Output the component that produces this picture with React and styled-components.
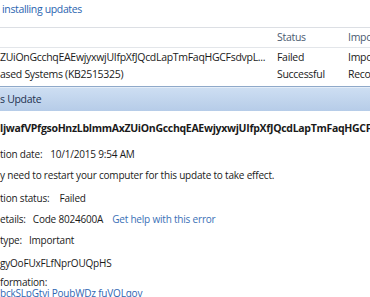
import React from "react"
import styled, { createGlobalStyle } from "styled-components"

const GlobalStyle = createGlobalStyle`
  html, body {
    margin: 0;
    padding: 0;
    background: #ffffff;
    overflow: hidden;
  }
  body {
    font-family: "Open Sans", "Noto Sans", "Liberation Sans", sans-serif;
    font-size: 10px;
    letter-spacing: -0.2px;
    color: #1a1a1a;
  }
`

const Screen = styled.div`
  position: relative;
  width: 370px;
  height: 297px;
  overflow: hidden;
  background: #ffffff;
`

const TopLink = styled.div`
  color: #2a64b0;
  font-size: 10.5px;
  letter-spacing: -0.35px;
  padding: 1px 0 0 2px;
  height: 26px;
  line-height: 16px;
`

const List = styled.div`
  border-top: 1px solid #dcdfe4;
`

const Row = styled.div`
  display: grid;
  grid-template-columns: 277px 71px 1fr;
  height: ${props => (props.header ? "19px" : "17px")};
  line-height: ${props => (props.header ? "19px" : "17px")};
  font-size: 10.5px;
  letter-spacing: -0.3px;
  white-space: nowrap;
  overflow: hidden;
  color: ${props => (props.header ? "#4a5a70" : "#1a1a1a")};
  border-bottom: ${props => (props.header ? "1px solid #e3e6ea" : "none")};
  margin-bottom: ${props => (props.header ? "1px" : "0")};
`

const Cell = styled.span`
  overflow: hidden;
  padding-right: ${props => props.padRight || 0}px;
`

const Dialog = styled.div`
  position: absolute;
  left: 0;
  right: 0;
  top: 87px;
  bottom: 0;
  background: #ffffff;
  box-shadow: 0 -1px 0 #8fa9c9;
`

const TitleBar = styled.div`
  height: 23px;
  line-height: 23px;
  background: linear-gradient(#cddef2, #b6cce8);
  border-top: 1px solid #e4edf8;
  color: #1d3150;
  font-size: 10.5px;
  letter-spacing: -0.3px;
`

const Body = styled.div`
  display: flex;
  flex-direction: column;
  white-space: nowrap;
  overflow: hidden;
`

const Line = styled.div`
  height: ${props => props.h || 21}px;
  line-height: ${props => props.lh || 16}px;
  font-weight: ${props => (props.bold ? 700 : 400)};
  font-size: ${props => (props.bold ? "10.5px" : "10px")};
  letter-spacing: ${props => (props.bold ? "-0.3px" : "-0.2px")};
  color: ${props => (props.link ? "#2f66b2" : "#1a1a1a")};
  overflow: ${props => (props.link ? "visible" : "hidden")};
`

const Value = styled.span`
  margin-left: ${props => props.gap || 7}px;
`

const HelpLink = styled.span`
  color: #3a70b6;
  margin-left: 9px;
`

export default function App() {
  return (
    <Screen>
      <GlobalStyle />
      <TopLink>installing updates</TopLink>
      <List>
        <Row header>
          <Cell />
          <Cell>Status</Cell>
          <Cell>Importance</Cell>
        </Row>
        <Row>
          <Cell padRight={8}>ZUiOnGcchqEAEwjyxwjUIfpXfJQcdLapTmFaqHGCFsdvpL...</Cell>
          <Cell>Failed</Cell>
          <Cell>Important</Cell>
        </Row>
        <Row>
          <Cell>ased Systems (KB2515325)</Cell>
          <Cell>Successful</Cell>
          <Cell>Recommended</Cell>
        </Row>
        <Row>
          <Cell>ased Systems (KB2533552)</Cell>
          <Cell>Successful</Cell>
          <Cell>Recommended</Cell>
        </Row>
      </List>
      <Dialog>
        <TitleBar>s Update</TitleBar>
        <Body>
          <Line h={9} />
          <Line bold h={26}>
            ljwafVPfgsoHnzLblmmAxZUiOnGcchqEAEwjyxwjUIfpXfJQcdLapTmFaqHGCFsdvpLqwe
          </Line>
          <Line h={21}>
            tion date:<Value gap={8}>10/1/2015 9:54 AM</Value>
          </Line>
          <Line h={23}>
            y need to restart your computer for this update to take effect.
          </Line>
          <Line h={21}>
            tion status:<Value gap={10}>Failed</Value>
          </Line>
          <Line h={21}>
            etails:<Value>Code 8024600A</Value>
            <HelpLink>Get help with this error</HelpLink>
          </Line>
          <Line h={23}>
            type:<Value>Important</Value>
          </Line>
          <Line h={22}>gyOoFUxFLfNprOUQpHS</Line>
          <Line h={11} lh={11}>formation:</Line>
          <Line link lh={11}>bckSLpGtvi PoubWDz fuVOLqov</Line>
        </Body>
      </Dialog>
    </Screen>
  )
}
